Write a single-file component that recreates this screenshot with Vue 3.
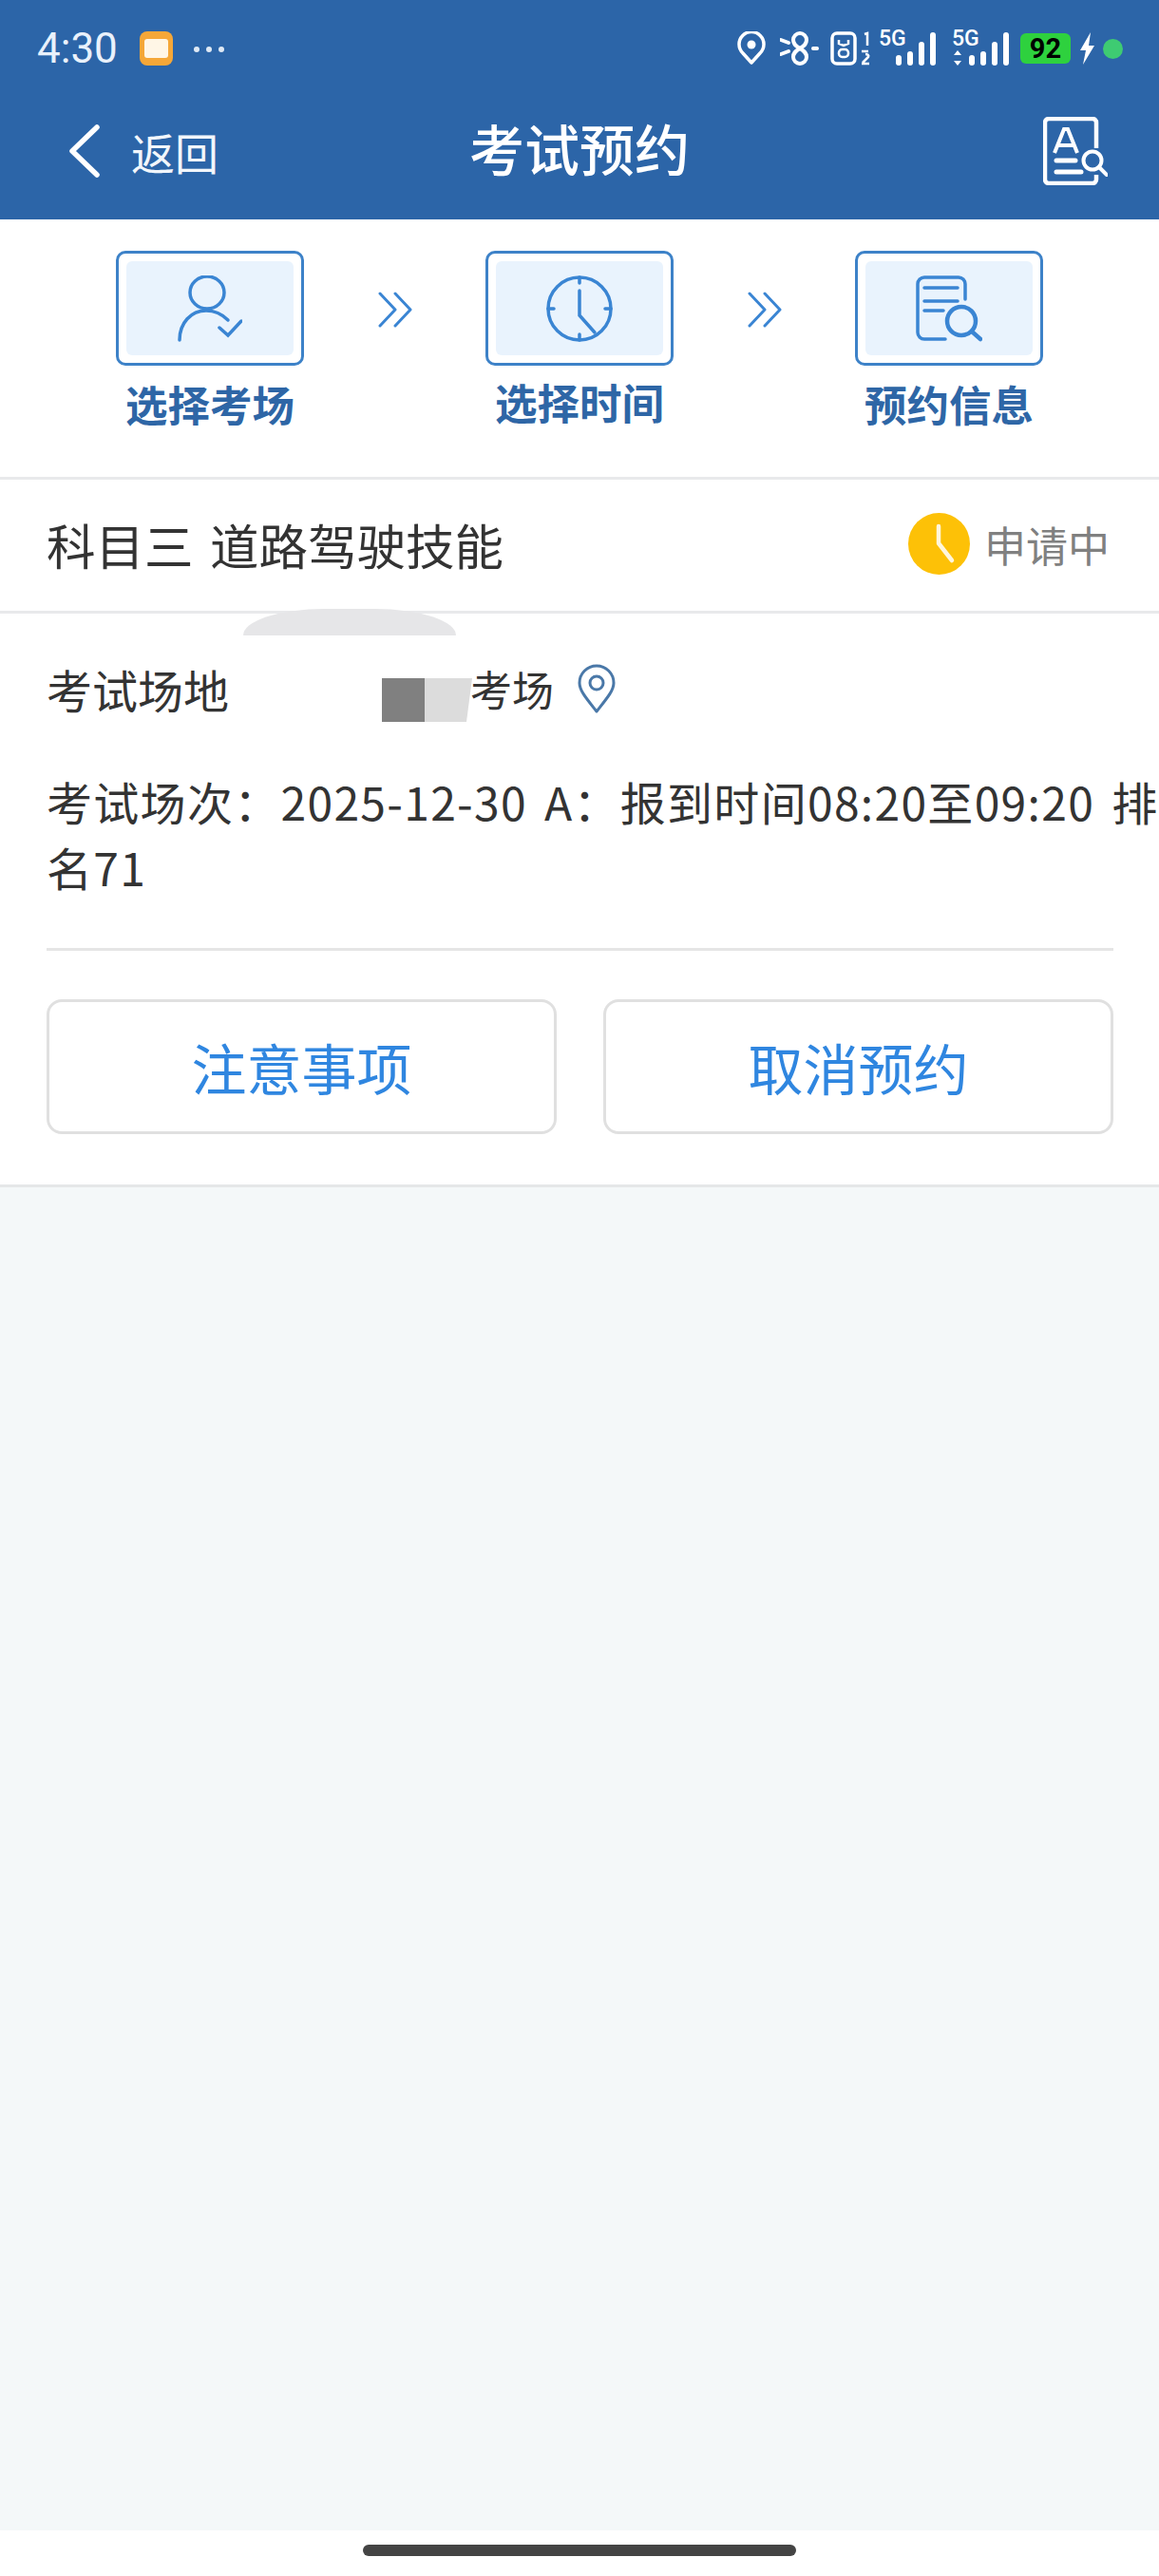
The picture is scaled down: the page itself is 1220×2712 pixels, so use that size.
<script setup>
const steps = [
  { label: '选择考场', icon: 'person' },
  { label: '选择时间', icon: 'clock' },
  { label: '预约信息', icon: 'doc' }
]
</script>

<template>
  <div class="page">
    <header class="top">
      <div class="status">
        <div class="status-left">
          <span class="time">4:30</span>
          <svg class="app-icon" width="35" height="36" viewBox="0 0 35 36">
            <rect width="35" height="36" rx="8" fill="#f5a738" />
            <rect x="5" y="8" width="25" height="20" rx="3" fill="#fff6e6" />
          </svg>
          <span class="dots"><i></i><i></i><i></i></span>
        </div>
        <div class="status-right">
          <svg width="30" height="36" viewBox="0 0 30 36" fill="none">
            <path d="M15 33 6 23a13 13 0 1 1 18 0Z" stroke="#fff" stroke-width="3.500" stroke-linejoin="round" />
            <circle cx="15" cy="14" r="4.500" fill="#fff" />
          </svg>
          <svg class="gap-bt" width="41" height="36" viewBox="0 0 41 36" fill="none" stroke="#fff" stroke-width="4" stroke-linecap="round">
            <path d="M1 9l8 3M1 24l8-3" />
            <path d="M21 18c-5-3-7-5-7-9a7 7 0 0 1 14 0c0 4-2 6-7 9 5 3 7 5 7 9a7 7 0 0 1-14 0c0-4 2-6 7-9Z" />
            <path d="M35 18h4" />
          </svg>
          <svg class="gap-sim" width="46" height="36" viewBox="0 0 46 36" fill="none">
            <rect x="2" y="2" width="24" height="32" rx="5" stroke="#fff" stroke-width="3.500" />
            <path d="M9 9v4l5 2 5-2V9" stroke="#fff" stroke-width="2.500" />
            <rect x="9" y="19" width="10" height="8" rx="3.500" stroke="#fff" stroke-width="2.500" />
            <path d="M36 3l3-1v13M33 21h7M34 33l6-6c1-2-1-3-3-3M33 34h8" stroke="#fff" stroke-width="2.500" />
          </svg>
          <div class="signal">
            <span class="five-g">5G</span>
            <div class="bars"><i style="height: 11px"></i><i style="height: 15px"></i><i style="height: 25px"></i><i style="height: 35px"></i></div>
          </div>
          <div class="signal second">
            <span class="five-g">5G</span>
            <svg class="updown" width="10" height="16" viewBox="0 0 10 16" fill="#fff">
              <path d="M5 0l4 5H1ZM5 16l4-5H1Z" />
            </svg>
            <div class="bars"><i style="height: 11px"></i><i style="height: 15px"></i><i style="height: 25px"></i><i style="height: 35px"></i></div>
          </div>
          <div class="battery"><span>92</span></div>
          <svg class="bolt" width="17" height="34" viewBox="0 0 17 34" fill="#fff">
            <path d="M12 0 1 19h6L4 34l12-20h-6Z" />
          </svg>
          <span class="dot"></span>
        </div>
      </div>
      <div class="nav">
        <div class="back">
          <svg width="34" height="56" viewBox="0 0 34 56" fill="none">
            <path d="M30 3 4 28l26 25" stroke="#fff" stroke-width="5.500" stroke-linecap="round" stroke-linejoin="round" />
          </svg>
          <span>返回</span>
        </div>
        <div class="title">考试预约</div>
        <svg class="nav-search" width="68" height="72" viewBox="0 0 68 72" fill="none" stroke="#fff">
          <path d="M56 33V6a4 4 0 0 0-4-4H6A4 4 0 0 0 2 6v60a4 4 0 0 0 4 4h46a4 4 0 0 0 4-4v-5" stroke-width="4.500" />
          <path d="M12 38 22 13h4l10 25M16 30h16" stroke-width="4" />
          <path d="M14 46h20M14 58h26" stroke-width="5" stroke-linecap="round" />
          <circle cx="52" cy="46" r="9.500" stroke-width="4" />
          <path d="M59 53l8 8" stroke-width="4" stroke-linecap="round" />
        </svg>
      </div>
    </header>

    <section class="steps">
      <template v-for="(step, i) in steps" :key="step.label">
        <div class="step" :class="{ raised: i === 1 }">
          <div class="step-box">
            <div class="step-inner">
              <svg v-if="step.icon === 'person'" width="68" height="70" viewBox="0 0 68 70" fill="none" stroke="#3a85d3" stroke-width="3.500" stroke-linecap="round">
                <ellipse cx="31" cy="18" rx="18" ry="17" />
                <path d="M2 68c0-18 12-31 28-31 8 0 17 4 23 10" />
                <path d="M44 55l9 8 14-15" />
              </svg>
              <svg v-else-if="step.icon === 'clock'" width="70" height="70" viewBox="0 0 70 70" fill="none" stroke="#3a85d3" stroke-width="3.500" stroke-linecap="round">
                <circle cx="35" cy="35" r="33" />
                <path d="M35 16v26l16 18" />
                <path d="M35 2v6M35 62v6M2 35h6M62 35h6" />
              </svg>
              <svg v-else width="70" height="70" viewBox="0 0 70 70" fill="none" stroke="#3a85d3" stroke-width="3.500" stroke-linecap="round">
                <path d="M52 25V9a7 7 0 0 0-7-7H9a7 7 0 0 0-7 7v51a7 7 0 0 0 7 7h22" />
                <path d="M9 13h35M9 27h35M9 37h20" />
                <circle cx="48" cy="48" r="15" stroke-width="4.500" />
                <path d="M59 59l9 8" stroke-width="4.500" />
              </svg>
            </div>
          </div>
          <div class="step-label">{{ step.label }}</div>
        </div>
        <svg v-if="i < steps.length - 1" class="chevrons" width="36" height="38" viewBox="0 0 36 38" fill="none" stroke="#3a85d3" stroke-width="3" stroke-linecap="round" stroke-linejoin="round">
          <path d="M2 2l16 17L2 36M18 2l16 17-16 17" />
        </svg>
      </template>
    </section>

    <section class="subject">
      <div class="subject-name">科目三 道路驾驶技能</div>
      <div class="subject-status">
        <svg width="65" height="65" viewBox="0 0 65 65">
          <circle cx="32.500" cy="32.500" r="32.500" fill="#fdc107" />
          <path d="M32 14v18l14 18" fill="none" stroke="#fff6dc" stroke-width="4.500" stroke-linecap="round" stroke-linejoin="round" />
        </svg>
        <span>申请中</span>
      </div>
    </section>

    <section class="detail">
      <div class="smudge"></div>
      <div class="place">
        <span class="place-label">考试场地</span>
        <span class="mosaic"><i></i><i></i></span>
        <span class="place-name">考场</span>
        <svg class="pin" width="40" height="52" viewBox="0 0 40 52" fill="none" stroke="#4a78a8" stroke-width="3">
          <path d="M20 50C9 36 2 28 2 20a18 18 0 0 1 36 0c0 8-7 16-18 30Z" stroke-linejoin="round" />
          <circle cx="20" cy="20" r="7" />
        </svg>
      </div>
      <div class="session">考试场次：2025-12-30 A：报到时间08:20至09:20 排<br />名71</div>
      <div class="rule"></div>
      <div class="actions">
        <button class="action">注意事项</button>
        <button class="action">取消预约</button>
      </div>
    </section>

    <div class="fill"></div>

    <footer class="home">
      <div class="home-bar"></div>
    </footer>
  </div>
</template>

<style>
html, body {
  margin: 0;
  background: #f4f8f9;
}
</style>

<style scoped>
.page {
  width: 1220px;
  height: 2712px;
  display: flex;
  flex-direction: column;
  overflow: hidden;
  background: #f4f8f9;
  font-family: "Noto Sans CJK SC", "Noto Sans", sans-serif;
  color: #333;
}

.top {
  height: 231px;
  flex: none;
  background: #2c65a8;
  color: #fff;
}

.status {
  height: 100px;
  display: flex;
  justify-content: space-between;
  padding: 33px 38px 0 39px;
  box-sizing: border-box;
}

.status-left,
.status-right {
  display: flex;
  align-items: flex-start;
}

.time {
  width: 108px;
  font: 400 44px/36px Roboto, sans-serif;
  color: #e9f1fb;
}

.dots {
  display: flex;
  gap: 7px;
  margin: 16px 0 0 22px;
}

.dots i {
  width: 6px;
  height: 6px;
  border-radius: 50%;
  background: #dfe9f5;
}

.gap-bt {
  margin-left: 15px;
}

.gap-sim {
  margin-left: 12px;
}

.signal {
  position: relative;
  width: 60px;
  height: 36px;
  margin-left: 5px;
}

.signal.second {
  margin-left: 17px;
}

.five-g {
  position: absolute;
  left: 0;
  top: -2px;
  font: 500 23px/20px Roboto, sans-serif;
  color: #fff;
}

.updown {
  position: absolute;
  left: 1px;
  top: 20px;
}

.bars {
  position: absolute;
  right: 0;
  bottom: 0;
  display: flex;
  align-items: flex-end;
  gap: 6px;
}

.bars i {
  width: 6px;
  border-radius: 3px;
  background: #fff;
}

.battery {
  width: 53px;
  height: 32px;
  margin: 2px 0 0 12px;
  border-radius: 6px;
  background: #2ed13e;
  text-align: center;
}

.battery span {
  font: 700 29px/32px Roboto, sans-serif;
  color: #000;
}

.bolt {
  margin: 1px 0 0 9px;
}

.dot {
  width: 21px;
  height: 21px;
  margin: 8px 0 0 8px;
  border-radius: 50%;
  background: #3ecb72;
}

.nav {
  position: relative;
  height: 131px;
  display: flex;
  align-items: center;
  justify-content: space-between;
  padding: 0 54px 0 72px;
}

.back {
  display: flex;
  align-items: center;
  gap: 32px;
  margin-top: -13px;
  font-size: 46px;
  color: #f2f6fb;
}

.title {
  position: absolute;
  left: 0;
  right: 0;
  top: 20px;
  text-align: center;
  font-size: 58px;
  line-height: 70px;
  font-weight: 500;
}

.nav-search {
  margin-top: -13px;
}

.steps {
  height: 271px;
  flex: none;
  display: flex;
  align-items: flex-start;
  padding: 33px 122px 0;
  box-sizing: border-box;
  justify-content: space-between;
  background: #fff;
}

.step {
  width: 198px;
  display: flex;
  flex-direction: column;
  align-items: center;
}

.step-box {
  width: 198px;
  height: 121px;
  padding: 8px;
  box-sizing: border-box;
  border: 3px solid #3d82c8;
  border-radius: 10px;
}

.step-inner {
  height: 100%;
  display: flex;
  align-items: center;
  justify-content: center;
  border-radius: 6px;
  background: #e9f3fd;
}

.step-label {
  margin-top: 8px;
  font-size: 44.500px;
  line-height: 64px;
  font-weight: 700;
  color: #2e66a6;
}

.raised .step-label {
  margin-top: 6px;
}

.chevrons {
  margin-top: 43px;
}

.subject {
  height: 144px;
  flex: none;
  display: flex;
  align-items: center;
  justify-content: space-between;
  padding: 0 52px 3px 49px;
  box-sizing: border-box;
  border-top: 3px solid #e8e9eb;
  border-bottom: 3px solid #e8e9eb;
  background: #fff;
}

.subject-name {
  font-size: 51.500px;
  line-height: 70px;
  word-spacing: 6px;
}

.subject-status {
  display: flex;
  align-items: center;
  gap: 15px;
  font-size: 44px;
  color: #808080;
}

.detail {
  position: relative;
  height: 604px;
  flex: none;
  padding: 0 48px 0 49px;
  box-sizing: border-box;
  border-bottom: 3px solid #e5e7e8;
  background: #fff;
}

.smudge {
  position: absolute;
  left: 256px;
  top: -5px;
  width: 224px;
  height: 28px;
  border-radius: 85px 85px 0 0 / 28px 28px 0 0;
  background: #e6e6e8;
}

.place {
  height: 127px;
  padding-top: 44px;
  box-sizing: border-box;
  display: flex;
  align-items: flex-start;
  font-size: 48px;
  line-height: 70px;
}

.place-label {
  width: 353px;
}

.mosaic {
  display: flex;
  width: 95px;
  height: 46px;
  margin-top: 24px;
}

.mosaic i:first-child {
  width: 45px;
  background: #808080;
}

.mosaic i:last-child {
  width: 50px;
  background: #dcdcdc;
  clip-path: polygon(0 0, 100% 0, 88% 100%, 0 100%);
}

.place-name {
  margin-left: -2px;
  font-size: 44px;
}

.pin {
  margin: 9px 0 0 25px;
}

.session {
  width: 1300px;
  margin-top: 36px;
  font-size: 48px;
  line-height: 69px;
  letter-spacing: 1.3px;
  word-spacing: 6px;
}

.rule {
  height: 3px;
  margin-top: 51px;
  background: #e5e5e5;
}

.actions {
  display: grid;
  grid-template-columns: 537px 537px;
  gap: 49px;
  margin-top: 51px;
}

.action {
  height: 142px;
  padding: 0;
  border: 3px solid #e0e0e0;
  border-radius: 16px;
  background: #fff;
  font-family: inherit;
  font-size: 58px;
  color: #2f86e0;
}

.fill {
  flex: 1;
}

.home {
  height: 48px;
  flex: none;
  display: flex;
  justify-content: center;
  padding-top: 15px;
  box-sizing: border-box;
  background: #fff;
}

.home-bar {
  width: 456px;
  height: 12px;
  border-radius: 6px;
  background: #444;
}
</style>
